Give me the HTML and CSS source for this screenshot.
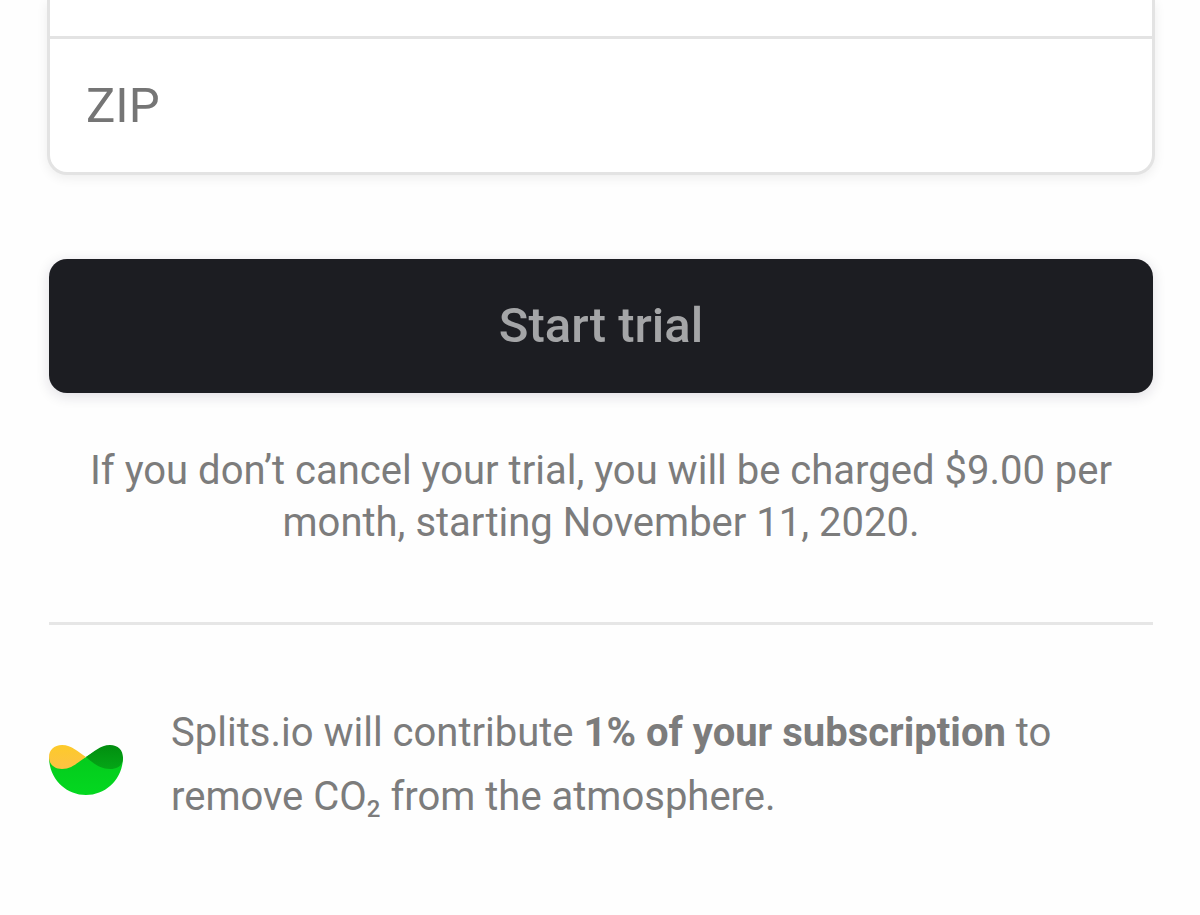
FILE: index.html
```html
<!DOCTYPE html>
<html lang="en">
<head>
<meta charset="utf-8">
<meta name="viewport" content="width=device-width, initial-scale=1">
<title>Start trial</title>
<link rel="stylesheet" href="styles.css">
</head>
<body>
<main class="checkout">
  <form class="form">
    <div class="fields">
      <div class="fields-row"></div>
      <input class="zip" type="text" name="zip" placeholder="ZIP" aria-label="ZIP">
    </div>
    <button class="submit" type="button">Start trial</button>
    <p class="terms">If you don’t cancel your trial, you will be charged $9.00 per month, starting November 11, 2020.</p>
  </form>
  <footer class="climate">
    <svg class="climate-logo" viewBox="0 0 74 52" aria-hidden="true">
      <defs>
        <linearGradient id="sun" x1="0" y1="0" x2="0" y2="1"><stop offset="0" stop-color="#fdca2a"/><stop offset="1" stop-color="#fcc244"/></linearGradient>
        <linearGradient id="leaf" x1="0" y1="0" x2="0" y2="1"><stop offset="0" stop-color="#028d10"/><stop offset="1" stop-color="#04a616"/></linearGradient>
        <linearGradient id="hill" x1="0" y1="0" x2="0" y2="1"><stop offset="0" stop-color="#04c81c"/><stop offset="1" stop-color="#04d820"/></linearGradient>
      </defs>
      <path fill="url(#hill)" d="M0 13C0 35 17 51 37 51S74 35 74 13L60 4 48 6 37 13 20 20Z"/>
      <path fill="url(#leaf)" d="M37 13C45 8 51 1 61 1c8 0 13 5 13 13 0 7-5 11-13 11-10 0-17-6-24-12Z"/>
      <path fill="url(#sun)" d="M0 13C0 6 5 1 13 1c10 0 16 7 24 12C29 18 23 25 13 25 5 25 0 20 0 13Z"/>
    </svg>
    <p class="climate-text">Splits.io will contribute <strong>1% of your subscription</strong> to remove CO<sub>2</sub> from the atmosphere.</p>
  </footer>
</main>
</body>
</html>
```
FILE: styles.css
```css
* { box-sizing: border-box; }

body {
  margin: 0;
  background: #fefefe;
  color: #7c7c7c;
  font-family: Roboto, "Liberation Sans", sans-serif;
}

.checkout { padding: 0 47px 0 49px; }

.form {
  display: flex;
  flex-direction: column;
  border-bottom: 3px solid #e6e6e6;
  padding-bottom: 73px;
}

.fields {
  margin: 0 -2px 84px;
  border: 3px solid #e3e3e3;
  border-top: 0;
  border-radius: 0 0 20px 20px;
  background: #fff;
  box-shadow: 0 3px 12px rgba(0, 0, 0, 0.07);
}

.fields-row {
  height: 39px;
  border-bottom: 3px solid #e3e3e3;
}

.zip {
  display: block;
  width: 100%;
  height: 133px;
  padding: 0 36px;
  border: 0;
  border-radius: 20px;
  background: transparent;
  color: #333;
  font: 400 49px Roboto, "Liberation Sans", sans-serif;
}

.zip::placeholder { color: #757575; opacity: 1; }

.submit {
  height: 134px;
  padding: 0 0 2px;
  border: 0;
  border-radius: 18px;
  background: #1c1d22;
  color: #a4a5a7;
  font: 500 49px Roboto, "Liberation Sans", sans-serif;
  box-shadow: 0 3px 14px rgba(30, 20, 60, 0.14);
}

.terms {
  margin: 52px 0 0;
  font-size: 40px;
  line-height: 52px;
  text-align: center;
}

.climate {
  display: flex;
  align-items: center;
  gap: 48px;
  padding: 76px 0;
}

.climate-logo {
  flex: none;
  width: 74px;
  height: 52px;
  margin-top: 10px;
}

.climate-text {
  margin: 0;
  font-size: 40px;
  line-height: 64px;
}

.climate-text strong { font-weight: 700; }

.climate-text sub {
  font-size: 24px;
  font-weight: 500;
  line-height: 1;
  vertical-align: -7px;
}
```
